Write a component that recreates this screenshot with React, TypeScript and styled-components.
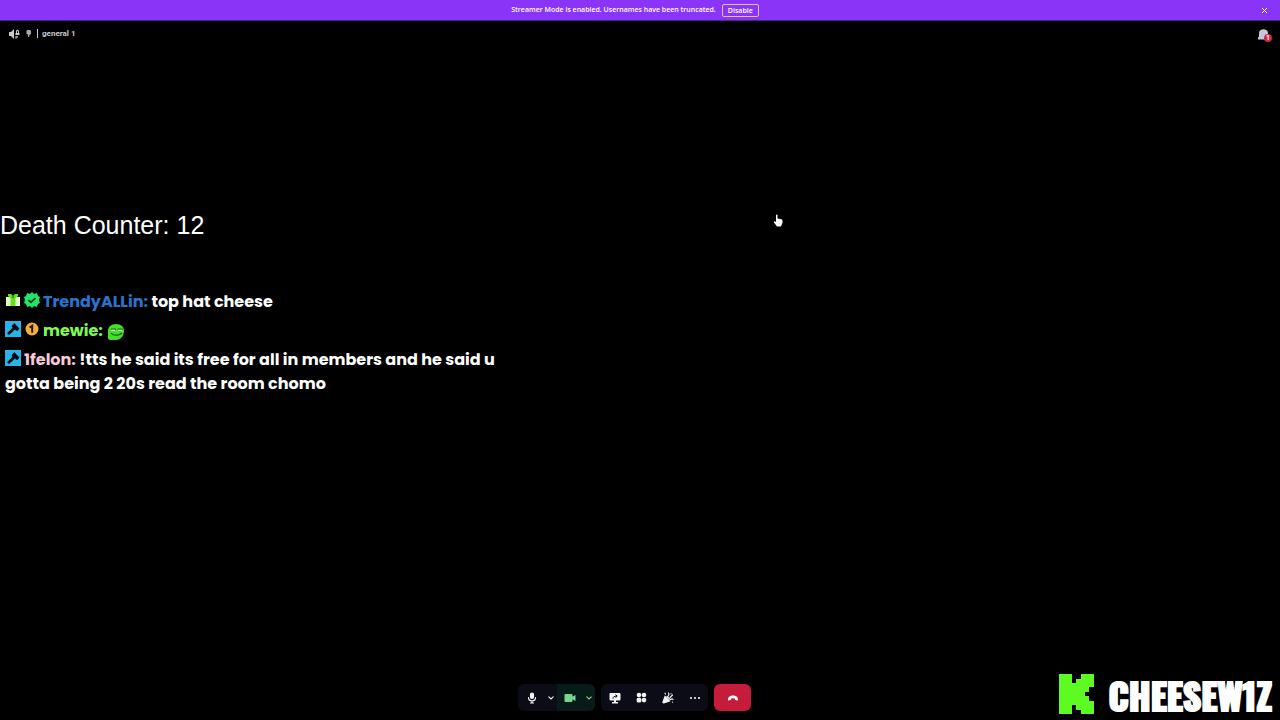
import React from "react";
import styled, { createGlobalStyle } from "styled-components";

const Global = createGlobalStyle`
  * { box-sizing: border-box; }
  body { margin: 0; background: #000; color: #fff; }
  button { font: inherit; color: inherit; border: 0; padding: 0; background: none; cursor: pointer; }
  svg { display: block; }
`;

const Page = styled.div`
  position: relative;
  min-height: 100vh;
  display: flex;
  flex-direction: column;
  overflow: hidden;
  font-family: Roboto, "Noto Sans", sans-serif;
`;

const Banner = styled.div`
  display: grid;
  grid-template-columns: 1fr auto 1fr;
  align-items: center;
  height: 21px;
  padding: 0 10px 0 0;
  background: #8a34f8;
  border-bottom: 1px solid #47208a;
`;

const Notice = styled.div`
  grid-column: 2;
  display: flex;
  align-items: center;
  gap: 6px;
  font-family: "Open Sans", "Noto Sans", sans-serif;
  font-size: 7px;
  line-height: 12px;
  font-weight: 600;
  white-space: nowrap;
`;

const DisableButton = styled.button`
  width: 37px;
  height: 13px;
  line-height: 11px;
  border: 1px solid #d9bcfd;
  border-radius: 2px;
`;

const CloseButton = styled.button`
  justify-self: end;
`;

const Header = styled.header`
  display: flex;
  align-items: center;
  justify-content: space-between;
  height: 25px;
  padding: 0 8px 0 8px;
`;

const Channel = styled.div`
  display: flex;
  align-items: center;
  color: #c9c9d2;
`;

const ChannelName = styled.h1`
  margin: 0 0 0 5px;
  padding-left: 4px;
  border-left: 1px solid #c9c9d2;
  font-size: 8px;
  line-height: 9px;
  font-weight: 700;
`;

const SmallGap = styled.span`
  margin-left: 5px;
`;

const InboxButton = styled.button`
  position: relative;
  padding-right: 3px;
  color: #c5c7d8;
`;

const Badge = styled.span`
  position: absolute;
  right: 0;
  bottom: -2px;
  width: 8px;
  height: 8px;
  border-radius: 50%;
  background: #d12b45;
  color: #fff;
  font-size: 7px;
  line-height: 8px;
  font-weight: 700;
  text-align: center;
`;

const Stage = styled.main`
  flex: 1;
  padding-top: 164px;
`;

const Counter = styled.div`
  font-family: "Liberation Sans", Arial, sans-serif;
  font-size: 25px;
  line-height: 30px;
`;

const Chat = styled.ul`
  list-style: none;
  margin: 50px 0 0;
  padding: 0 5px;
  width: 42%;
  min-width: 520px;
  display: flex;
  flex-direction: column;
  gap: 5px;
  font-family: Poppins, Inter, sans-serif;
  font-size: 16px;
  line-height: 24px;
  font-weight: 700;
`;

const Badges = styled.span`
  display: inline-flex;
  gap: 3px;
  margin-right: 3px;
  vertical-align: -1px;
`;

const User = styled.span<{ $color: string }>`
  color: ${(p) => p.$color};
`;

const Emote = styled.span`
  display: inline-block;
  vertical-align: -4px;
  margin-left: 1px;
`;

const Footer = styled.footer`
  display: grid;
  grid-template-columns: 1fr auto 1fr;
  align-items: end;
  padding: 0 8px 4px 0;
`;

const Controls = styled.div`
  grid-column: 2;
  display: flex;
  gap: 6px;
  padding: 0 0 5px;
  margin-right: 3px;
`;

const Group = styled.div`
  display: flex;
  height: 27px;
  border-radius: 6px;
  overflow: hidden;
  background: #0c0c16;
`;

const Control = styled.button<{ $w: number; $green?: boolean }>`
  display: flex;
  align-items: center;
  justify-content: center;
  width: ${(p) => p.$w}px;
  background: ${(p) => (p.$green ? "#071b18" : "transparent")};
  color: ${(p) => (p.$green ? "#79d58c" : "#f4f4f6")};
`;

const HangUp = styled.button`
  display: flex;
  align-items: center;
  justify-content: center;
  width: 37px;
  height: 27px;
  border-radius: 6px;
  background: #c51c3c;
`;

const Brand = styled.div`
  justify-self: end;
  display: flex;
  align-items: center;
  gap: 14px;
`;

const BrandName = styled.span`
  font-family: Impact, Oswald, Anton, "Bebas Neue", sans-serif;
  font-size: 36px;
  line-height: 42px;
  font-weight: 700;
  -webkit-text-stroke: 2px #fff;
`;

const Cursor = styled.svg`
  position: absolute;
  left: 773px;
  top: 214px;
`;

const Hammer = () => (
  <svg width="16" height="16" viewBox="0 0 16 16" aria-label="Moderator" role="img">
    <path fill="#25b5e9" d="M0 0h16v16H0z" />
    <path fill="#02080c" d="M9.500 2l1 1.500L13.500 6.500l1 1-2 2.500-1.500-.5-1-1L4 14l-1.800-1.800L7.500 6.800 6.500 5z" />
  </svg>
);

const Gift = () => (
  <svg width="16" height="16" viewBox="0 0 16 16" aria-label="Gifter" role="img">
    <path fill="#e4ffd2" d="M1 5h14v9H1z" />
    <path fill="#5ee31d" d="M5.500 5h5v9h-5zM3 2h3l2 2 2-2h3v2l-2 2H5L3 4z" />
    <path fill="#249c12" d="M7 4h2v2H7z" />
  </svg>
);

const Verified = () => (
  <svg width="16" height="16" viewBox="0 0 16 16" aria-label="Verified" role="img">
    <path fill="#20e66b" d="M8 0l2 2 3-1 1 3 2 1-1 3 1 3-2 1-1 3-3-1-2 2-2-2-3 1-1-3-2-1 1-3-1-3 2-1 1-3 3 1z" />
    <path fill="none" stroke="#032a12" strokeWidth="1.7" d="M4.500 8.200l2.400 2.200 4.600-4.400" />
  </svg>
);

const First = () => (
  <svg width="16" height="16" viewBox="0 0 16 16" aria-label="Rank one" role="img">
    <circle cx="8" cy="8" r="6.500" fill="#f3ae3d" />
    <path fill="none" stroke="#2b1804" strokeWidth="2" d="M5.500 6.500L8.200 4.800v7" />
  </svg>
);

const Face = () => (
  <svg width="17" height="16" viewBox="0 0 17 16" aria-label="Smug emote" role="img">
    <path fill="#43df29" d="M1 15V7c0-4 3-7 8-7s8 3 8 7-3 9-8 9H3z" />
    <path fill="#1a6a1c" d="M4 4.500h5v1.200H4zM10.500 4.500h5v1.200h-5z" />
    <path fill="#d8ffd2" d="M4.500 5.700h3.500v1.300H4.500zM11 5.700h3.500v1.300H11z" />
    <path fill="none" stroke="#12561a" strokeWidth="1.200" d="M4 9c2 3 8 3 11 0" />
  </svg>
);

const Chevron = () => (
  <svg width="6" height="4" viewBox="0 0 6 4" fill="none" stroke="currentColor" strokeWidth="1.1" strokeLinecap="round">
    <path d="M.8.8L3 3 5.200.8" />
  </svg>
);

export default function App() {
  return (
    <Page>
      <Global />
      <Banner>
        <Notice>
          <span>Streamer Mode is enabled. Usernames have been truncated.</span>
          <DisableButton>Disable</DisableButton>
        </Notice>
        <CloseButton aria-label="Close">
          <svg width="11" height="11" viewBox="0 0 11 11" stroke="#fff" strokeWidth="1">
            <path d="M3 3l5 5M8 3L3 8" />
          </svg>
        </CloseButton>
      </Banner>
      <Header>
        <Channel>
          <svg width="12" height="12" viewBox="0 0 12 12" fill="currentColor">
            <path d="M1 4h2l3-3v10L3 8H1z" />
            <path d="M8 5V3.500C8 1 11 1 11 3.500V5h.5v2h-4V5zM9 5h1V3.500c0-.8-1-.8-1 0z" />
            <path d="M7.300 8h2.700c0 1.500-1 2.500-2.700 3z" opacity=".8" />
          </svg>
          <SmallGap>
            <svg width="7" height="9" viewBox="0 0 7 9" fill="#a7a7ad">
              <path d="M2 1h3l1 1v3l-1.500 1L4 8H3V5.500L1.500 5V2z" />
            </svg>
          </SmallGap>
          <ChannelName>general 1</ChannelName>
        </Channel>
        <InboxButton aria-label="Open chat, one unread">
          <svg width="12" height="12" viewBox="0 0 12 12" fill="currentColor">
            <path d="M1 11.500V9.500l1-1V5c0-5 9-5 9 0v6.500z" />
          </svg>
          <Badge>1</Badge>
        </InboxButton>
      </Header>
      <Stage>
        <Counter>Death Counter: 12</Counter>
        <Chat>
          <li>
            <Badges><Gift /><Verified /></Badges>
            <User $color="#2874cf">TrendyALLin:</User> top hat cheese
          </li>
          <li>
            <Badges><Hammer /><First /></Badges>
            <User $color="#7dfa55">mewie:</User> <Emote><Face /></Emote>
          </li>
          <li>
            <Badges><Hammer /></Badges>
            <User $color="#f6c9d6">1felon:</User> !tts he said its free for all in members and he said u gotta being 2 20s read the room chomo
          </li>
        </Chat>
      </Stage>
      <Footer>
        <Controls>
          <Group>
            <Control $w={27} aria-label="Mute">
              <svg width="10" height="12" viewBox="0 0 10 12" fill="none" stroke="currentColor" strokeWidth="1.200" strokeLinecap="round">
                <rect x="3.500" y="1" width="3" height="5.500" rx="1.500" fill="currentColor" />
                <path d="M1.500 5.500c0 4.500 7 4.500 7 0M5 9v2M3.500 11h3" />
              </svg>
            </Control>
            <Control $w={12} aria-label="Microphone options"><Chevron /></Control>
            <Control $w={26} $green aria-label="Camera">
              <svg width="12" height="10" viewBox="0 0 12 10" fill="currentColor">
                <path d="M1.500 1H7.500q1 0 1 1v6q0 1-1 1H1.500q-1 0-1-1V2q0-1 1-1zM8 4l3.500-2v6L8 6z" />
              </svg>
            </Control>
            <Control $w={12} $green aria-label="Camera options"><Chevron /></Control>
          </Group>
          <Group>
            <Control $w={27} aria-label="Share screen">
              <svg width="12" height="12" viewBox="0 0 12 12" fill="currentColor">
                <path d="M1.500 1h9q1 0 1 1v5q0 1.500-1 1.500h-9q-1 0-1-1.500V2q0-1 1-1zM5 8h2v2h2v1.500H3V10h2z" />
                <path fill="none" stroke="#0c0c16" strokeWidth="1" d="M4 6.800c0-2 1-2.700 4-2.700M6.500 2.500L8.200 4.100 6.500 5.700" />
              </svg>
            </Control>
            <Control $w={26} aria-label="Activities">
              <svg width="11" height="11" viewBox="0 0 11 11" fill="currentColor">
                <circle cx="3" cy="3" r="2.300" /><circle cx="8" cy="3" r="2.300" />
                <rect x=".7" y="5.800" width="4.600" height="4.600" rx="1.500" />
                <circle cx="8" cy="8.100" r="2.300" />
              </svg>
            </Control>
            <Control $w={27} aria-label="Soundboard">
              <svg width="12" height="12" viewBox="0 0 12 12" fill="none" stroke="currentColor" strokeWidth="1.200" strokeLinecap="round">
                <path fill="currentColor" d="M3 4.500L7.500 9 1.800 10.800q-1 .2-.8-.8z" />
                <path d="M3 1.200l.5.800M6.500 1c.8 1 .5 2-.3 3M5 4.500l2.500 2.500M8 5.500L10.500 3M8.500 7.500c1-.7 2-.7 2.500 0M9 1.500v.2M10.500 10v.2" />
              </svg>
            </Control>
            <Control $w={27} aria-label="More options">
              <svg width="12" height="4" viewBox="0 0 12 4" fill="currentColor">
                <circle cx="2" cy="2" r="1.100" /><circle cx="6" cy="2" r="1.100" /><circle cx="10" cy="2" r="1.100" />
              </svg>
            </Control>
          </Group>
          <HangUp aria-label="Disconnect">
            <svg width="12" height="8" viewBox="0 0 12 8" fill="#fff">
              <path d="M1 5.500C1 0 11 0 11 5.500q0 1.200-1 1L8.500 6q-.7-.2-.7-1.400-1.800-.7-3.600 0 0 1.200-.7 1.400L2 6.500q-1 .2-1-1z" />
            </svg>
          </HangUp>
        </Controls>
        <Brand>
          <svg width="35" height="42" viewBox="0 0 35 42" fill="#5dfb22" role="img" aria-label="Kick">
            <path d="M0 0h13v9h4V5h5V0h13v13h-5v5h-4v4h4v5h5v13H22v-4h-5v-5h-4v9H0z" />
          </svg>
          <BrandName>CHEESEW1Z</BrandName>
        </Brand>
      </Footer>
      <Cursor width="10" height="13" viewBox="0 0 10 13" fill="#fff">
        <path d="M3 1q1-1 1.500 0v3.500l4 .8q1 .3 1 1.500v2L8 12.500H4L.8 8.200q-.5-1 .7-1L3 8z" />
      </Cursor>
    </Page>
  );
}
